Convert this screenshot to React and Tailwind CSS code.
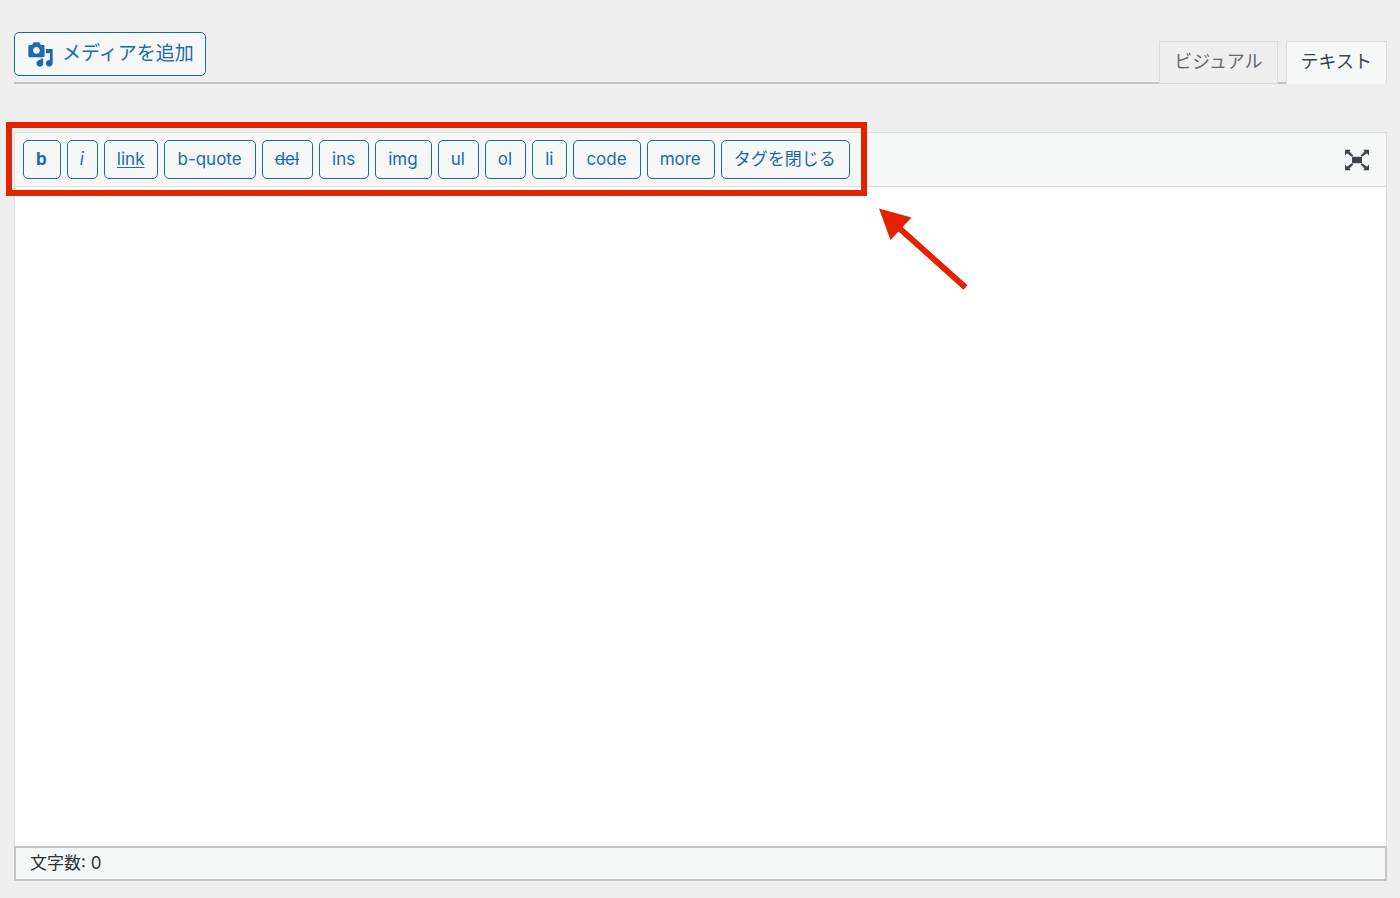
const quickTags = [
  { label: 'b', className: 'font-bold' },
  { label: 'i', className: 'italic' },
  { label: 'link', className: 'underline underline-offset-2' },
  { label: 'b-quote', className: '' },
  { label: 'del', className: 'line-through' },
  { label: 'ins', className: '' },
  { label: 'img', className: '' },
  { label: 'ul', className: '' },
  { label: 'ol', className: '' },
  { label: 'li', className: '' },
  { label: 'code', className: '' },
  { label: 'more', className: '' },
  { label: 'タグを閉じる', className: '' },
];

function MediaIcon() {
  return (
    <svg viewBox="0 0 20 20" className="size-[27px] shrink-0 fill-current" aria-hidden="true">
      <path d="M13 11V4c0-.55-.45-1-1-1h-1.67L9 1H5L3.67 3H2c-.55 0-1 .45-1 1v7c0 .55.45 1 1 1h10c.55 0 1-.45 1-1zM7 4.5c1.38 0 2.5 1.12 2.5 2.5S8.38 9.5 7 9.5 4.5 8.38 4.5 7 5.62 4.5 7 4.5zM14 6h5v10.5c0 1.38-1.12 2.5-2.5 2.5S14 17.88 14 16.5s1.12-2.5 2.5-2.5c.17 0 .34.02.5.05V9h-3V6zm-4 8.05V13h2v3.5c0 1.38-1.12 2.5-2.5 2.5S7 17.88 7 16.5 8.12 14 9.5 14c.17 0 .34.02.5.05z" />
    </svg>
  );
}

function FullscreenIcon() {
  return (
    <svg viewBox="0 0 26 22" className="h-[22px] w-[26px] fill-[#3c434a]" aria-hidden="true">
      <path d="M8 7.800h10v6.400H8z" />
      <path d="M1 .7h5.800L5.400 2.400l3.900 4-1.400 1.400L3 4.200 1 6.400zM25 .7h-5.800l1.400 1.700-3.900 4 1.400 1.400L23 4.200l2 2.200zM1 21.300h5.800l-1.400-1.700 3.900-4-1.400-1.400L3 17.800l-2-2.200zM25 21.300h-5.800l1.400-1.700-3.900-4 1.400-1.400 4.900 3.600 2-2.200z" />
    </svg>
  );
}

function Callout() {
  return (
    <div className="pointer-events-none absolute -top-[18px] -right-[17px] -bottom-[17px] -left-[17px] border-[6px] border-[#e42200]">
      <svg
        viewBox="0 0 90 84"
        className="absolute top-full left-full mt-[17px] ml-[17px] h-[84px] w-[90px]"
        aria-hidden="true"
      >
        <path d="M1 1.500L33.500 10.500L12.500 33z" fill="#e42200" />
        <path d="M20 20L87.500 80.500" stroke="#e42200" strokeWidth="6" />
      </svg>
    </div>
  );
}

export default function App() {
  return (
    <main className="flex min-h-screen flex-col bg-[#efefef] pt-8 pr-[13px] pb-[17px] pl-[14px] font-['Inter','Noto_Sans_CJK_JP',sans-serif] text-[#3c434a]">
      <header className="flex items-start justify-between border-b-2 border-[#c3c4c7] pb-[6px]">
        <button
          type="button"
          className="flex h-11 items-center gap-2 rounded-[5px] border border-[#1b69b0] bg-[#f6f7f7] px-[11px] pl-3 text-[19px] text-[#1b69b0]"
        >
          <MediaIcon />
          メディアを追加
        </button>
        <div role="tablist" className="-mb-2 flex gap-2 self-end text-lg">
          <button
            type="button"
            role="tab"
            aria-selected="false"
            className="h-[43px] border border-[#dcdcde] bg-[#efefef] px-[14px] pb-[2px] text-[#646970]"
          >
            ビジュアル
          </button>
          <button
            type="button"
            role="tab"
            aria-selected="true"
            className="h-[43px] border border-b-0 border-[#dcdcde] bg-[#f6f7f7] px-[14px] pb-[2px]"
          >
            テキスト
          </button>
        </div>
      </header>

      <section className="mt-12 flex flex-1 flex-col">
        <div className="flex items-center justify-between border border-[#dcdcde] bg-[#f6f7f7] py-[7px] pr-4 pl-2">
          <div className="relative flex gap-[6px]">
            {quickTags.map(({ label, className }) => (
              <button
                key={label}
                type="button"
                className={`h-[39px] rounded-[5px] border border-[#1b69b0] pr-[13px] pl-3 text-[17px] text-[#1b69b0] ${className}`}
              >
                {label}
              </button>
            ))}
            <Callout />
          </div>
          <button type="button" aria-label="集中執筆モード">
            <FullscreenIcon />
          </button>
        </div>
        <textarea
          aria-label="本文"
          className="block w-full flex-1 resize-none border-x border-[#dcdcde] bg-white p-4 text-lg outline-none"
        />
        <footer className="border-2 border-[#c3c4c7] bg-[#f6f7f7] px-[14px] py-1 text-[17px] leading-[23px] text-[#2c3338]">
          文字数: 0
        </footer>
      </section>
    </main>
  );
}
